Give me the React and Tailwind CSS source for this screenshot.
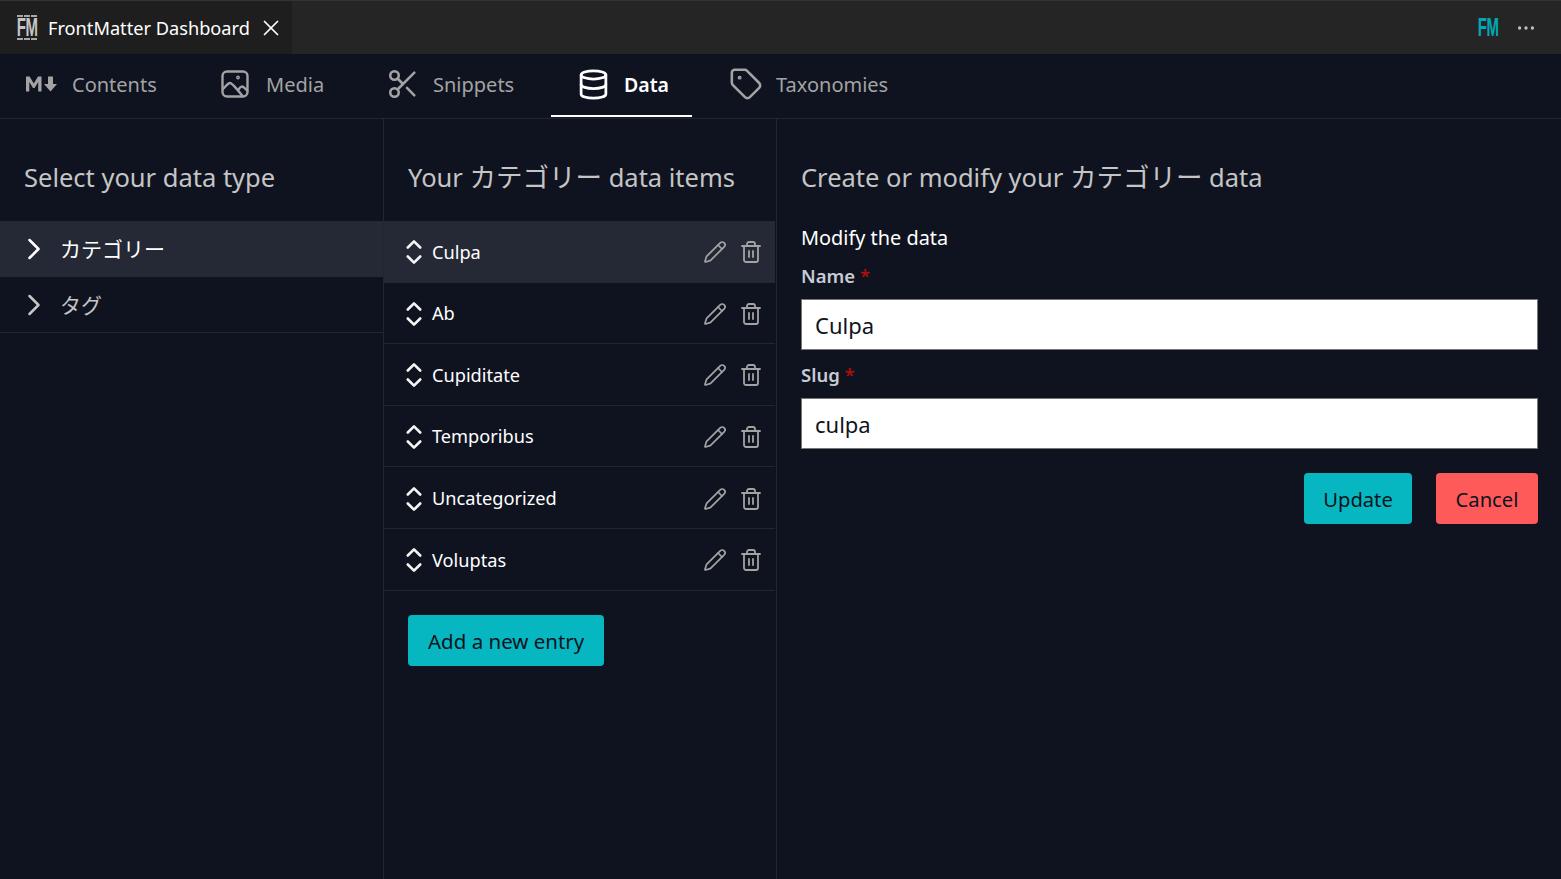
import React from "react";
import { Scissors, Database, Tag, ChevronRight, Pencil, Trash2, X, MoreHorizontal } from "lucide-react";

const font = "font-['Noto_Sans','Noto_Sans_CJK_JP',sans-serif]";
const heading = "text-[25.5px] leading-[34px] text-[#c5c5c5]";
const items = ["Culpa", "Ab", "Cupiditate", "Temporibus", "Uncategorized", "Voluptas"];

function MdIcon() {
    return (
        <svg width="33" height="20" viewBox="0 0 33 20" fill="#a3a3a3">
            <path d="M1 17.500V2.500h3.600L8.800 9.500l4.200-7H16.500v15h-3.300V8l-3.600 6H8L4.300 8v9.500z" />
            <path d="M23 2.500h5v7.500h4l-6.500 7.500L19 10h4z" />
        </svg>
    );
}

function ImageIcon() {
    return (
        <svg width="28" height="28" viewBox="0 0 28 28" fill="none" stroke="#a3a3a3" strokeWidth="2.4" strokeLinecap="round" strokeLinejoin="round">
            <rect x="1.500" y="1.500" width="25" height="25" rx="4.500" />
            <path d="M2 19c2.500-2.500 5-6 7-6s7 6 12.500 13" />
            <path d="M17.500 19.500c1-1.500 2-3 3.500-3s3 2 5 4" />
            <circle cx="17" cy="7.500" r="0.700" />
        </svg>
    );
}

function Selector() {
    return (
        <svg width="16" height="26" viewBox="0 0 16 26" fill="none" stroke="#f5f5f5" strokeWidth="2.600" strokeLinecap="round" strokeLinejoin="round">
            <path d="M1.800 8.500 8 2.300l6.200 6.200" />
            <path d="M1.800 17.500 8 23.700l6.200-6.200" />
        </svg>
    );
}

function FmLogo({ className, dashed }) {
    return (
        <div className={`flex flex-col items-center justify-center ${className}`}>
            {dashed ? <div className="w-[20px] border-t-2 border-dashed border-[#a8a8a8]" /> : null}
            <span className="font-['Liberation_Sans',sans-serif] font-bold leading-[0.84] tracking-[-1px] scale-x-[0.6] whitespace-nowrap">FM</span>
            {dashed ? <div className="w-[20px] border-t-2 border-dashed border-[#a8a8a8]" /> : null}
        </div>
    );
}

function NavTab({ icon, label, active, className }) {
    return (
        <div className={`flex items-center h-[63px] border-b-2 ${active ? "border-white text-white font-semibold" : "border-transparent text-[#a3a3a3]"} ${className}`}>
            {icon}
            <span className={`mt-[1px] leading-none ${active ? "text-[19.5px]" : "text-[20px]"}`}>{label}</span>
        </div>
    );
}

export default function App() {
    return (
        <div className={`${font} w-[1561px] h-[879px] flex flex-col bg-[#0f1320] overflow-hidden`}>
            <div className="h-[54px] flex items-center justify-between bg-[#252526] border-t border-[#333]">
                <div className="h-full w-[292px] bg-[#1e1e1e] flex items-center text-white">
                    <FmLogo dashed className="w-[20px] ml-[17px] text-[#c5c5c5] text-[25px]" />
                    <span className="ml-[11px] mt-[1px] text-[18.2px] leading-none">FrontMatter Dashboard</span>
                    <X size={26} strokeWidth={1.6} className="ml-[8px]" />
                </div>
                <div className="flex items-center pr-[24px]">
                    <FmLogo className="w-[24px] text-[#00aab5] text-[25px]" />
                    <MoreHorizontal size={22} strokeWidth={1.6} className="ml-[15px] text-[#c5c5c5]" />
                </div>
            </div>

            <nav className="h-[65px] flex border-b border-[#222632]">
                <NavTab className="pl-[25px] w-[189px]" icon={<span className="mr-[14px] -mt-[1px]"><MdIcon /></span>} label="Contents" />
                <NavTab className="pl-[32px] w-[177px]" icon={<span className="mr-[17px] -mt-[2px]"><ImageIcon /></span>} label="Media" />
                <NavTab className="pl-[20px] w-[185px]" icon={<Scissors size={34} strokeWidth={1.8} className="mr-[13px] -mt-[1px]" />} label="Snippets" />
                <NavTab active className="pl-[26px] w-[141px]" icon={<Database size={33} strokeWidth={2} className="mr-[14px] -mt-[1px]" />} label="Data" />
                <NavTab className="pl-[37px]" icon={<Tag size={34} strokeWidth={1.8} className="mr-[13px] -mt-[1px]" />} label="Taxonomies" />
            </nav>

            <div className="flex-1 flex">
                <aside className="w-[384px] border-r border-[#222632]">
                    <h2 className={`h-[102px] pl-[24px] pt-[41px] ${heading}`}>Select your data type</h2>
                    <div className="h-[56px] flex items-center pl-[16px] bg-[#252936] text-white">
                        <ChevronRight size={36} strokeWidth={1.7} />
                        <span className="ml-[8px] text-[21px] leading-none">カテゴリー</span>
                    </div>
                    <div className="h-[56px] flex items-center pl-[16px] border-b border-[#222632] text-[#c5c5c5]">
                        <ChevronRight size={36} strokeWidth={1.7} />
                        <span className="ml-[8px] mt-[1px] text-[21px] leading-none">タグ</span>
                    </div>
                </aside>

                <section className="w-[393px] border-r border-[#222632]">
                    <h2 className={`h-[102px] pl-[24px] pt-[41px] ${heading}`}>Your <span className="text-[26.5px]">カテゴリー</span> data items</h2>
                    {items.map((item, i) => (
                        <div key={item} className={`h-[61.6px] mr-[1px] flex items-center pl-[22px] pr-[12px] ${i === 0 ? "pt-[1px] bg-[#252936]" : "pt-[2px] border-b border-[#222632]"}`}>
                            <Selector />
                            <span className="ml-[10px] text-[18.2px] text-white">{item}</span>
                            <Pencil size={24} strokeWidth={1.7} className="ml-auto text-[#a3a3a3]" />
                            <Trash2 size={24} strokeWidth={1.8} className="ml-[12px] text-[#a3a3a3]" />
                        </div>
                    ))}
                    <button className="mt-[24px] ml-[24px] h-[51px] pt-[2px] px-[20px] rounded-[4px] bg-[#06b6c0] text-[#0f1320] text-[20.5px]">Add a new entry</button>
                </section>

                <main className="flex-1 pl-[24px] pr-[23px]">
                    <h2 className={`h-[102px] pt-[41px] ${heading}`}>Create or modify your <span className="text-[26.5px]">カテゴリー</span> data</h2>
                    <h3 className="text-[19.9px] leading-[30px] text-white pt-[2px]">Modify the data</h3>
                    <label className="block mt-[10px] text-[18.5px] leading-[26px] font-semibold text-[#c8ccd4]">Name <span className="text-[#a80f0f]">*</span></label>
                    <div className="mt-[10px] h-[51px] flex items-center pl-[13px] pt-[1px] bg-white border border-[#767676] text-[22px] text-[#0f1320]">Culpa</div>
                    <label className="block mt-[12px] text-[18.5px] leading-[26px] font-semibold text-[#c8ccd4]">Slug <span className="text-[#a80f0f]">*</span></label>
                    <div className="mt-[10px] h-[51px] flex items-center pl-[13px] pt-[1px] bg-white border border-[#767676] text-[22px] text-[#0f1320]">culpa</div>
                    <div className="mt-[24px] flex justify-end gap-[24px]">
                        <button className="h-[51px] w-[108px] pt-[1px] rounded-[4px] bg-[#06b6c0] text-[#0f1320] text-[20.2px]">Update</button>
                        <button className="h-[51px] w-[102px] pt-[1px] rounded-[4px] bg-[#ff5a5a] text-[#0f1320] text-[20.2px]">Cancel</button>
                    </div>
                </main>
            </div>
        </div>
    );
}
